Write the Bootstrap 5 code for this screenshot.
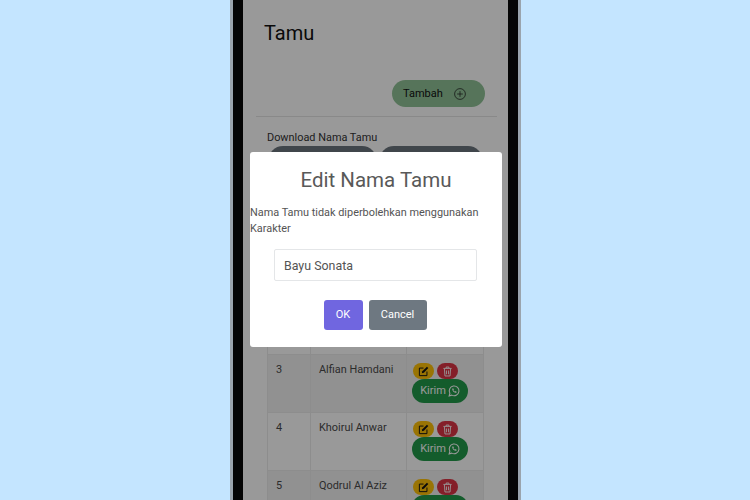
<!DOCTYPE html>
<html lang="id">
<head>
<meta charset="utf-8">
<title>Tamu</title>
<link rel="stylesheet" href="https://cdn.jsdelivr.net/npm/bootstrap@5.3.0/dist/css/bootstrap.min.css">
<style>
html,body{height:500px;overflow:hidden}
body{background:#c4e5ff;font-family:Roboto,"Liberation Sans",sans-serif}
.phone-shell{width:291px;height:500px;background:#050505;border-left:3px solid #9aa4ad;border-right:3px solid #9aa4ad;padding:0 10px;flex:none;margin-left:1px}
.phone-screen{height:500px;overflow:hidden;background:#fff}
.page-title{font-size:20px;line-height:24px;font-weight:400;color:#111;margin:21px 0 35px 21px}
.add-row{padding-right:23px}
.btn-add{width:93px;height:27px;border-radius:14px;background:#8fc296;border:0;font-size:11px;font-weight:400;color:#111;padding:1px 0 0 11px;gap:11px}
.rule{margin:9px 11px 14px 13px;border-top:1px solid #000;opacity:.1}
.dl-label{font-size:10.9px;line-height:14px;margin-left:24px;color:#333}
.dl-row{margin:1px 0 0 25px;gap:2px}
.btn-dl{height:30px;border-radius:15px;background:#6c757d;border:0;color:#fff;font-size:11px;padding:0}
.btn-dl-a{width:109px}
.btn-dl-b{width:104px}
.guest-wrap{margin:12px 24px 0}
.guest-table{font-size:10.9px;margin:0;table-layout:fixed;--bs-table-border-color:#ececec;--bs-table-color:#4a4a4a;--bs-table-striped-color:#4a4a4a;color:#4a4a4a}
.guest-table th,.guest-table td{padding:6px 8px;height:58px;vertical-align:top;line-height:17px}
.guest-table thead th{height:50px}
.col-no{width:43px}
.col-name{width:96px}
.guest-table td.act-cell{padding:8px 2px 0 5px}
.chip-row{gap:3px;padding-left:1px}
.chip{width:21px;height:16px;border-radius:8px;border:0;padding:0}
.chip-edit{background:#ffc107;color:#111}
.chip-del{background:#dc3545;color:#fff}
.btn-kirim{width:56px;height:24px;border-radius:12px;background:#22994a;border:0;color:#fff;font-size:11px;padding:0;gap:2px}
.dim-layer{background:rgba(0,0,0,.4);z-index:5}
.alert-box{width:252px;height:195px;background:#fff;border-radius:3px;color:#545454;margin:0 0 1px 1px}
.alert-title{font-size:20.5px;line-height:25px;font-weight:400;color:#595959;margin:16px 0 0;text-align:center}
.alert-text{font-size:10.9px;line-height:16px;margin:12px 0 0;color:#545454}
.alert-input{width:203px;height:32px;margin:12px 0 0 24px;border:1px solid #e4e6e8;border-radius:2px;font-size:12.4px;padding:0 9px;color:#545454;box-shadow:none}
.alert-actions{margin-top:19px;gap:6px;padding-right:2px}
.btn-ok,.btn-cancel{height:30px;border:0;border-radius:3px;color:#fff;font-size:11px;padding:0}
.btn-ok{width:39px;background:#7066e0}
.btn-cancel{width:58px;background:#6e7881}
</style>
</head>
<body class="d-flex justify-content-center">
<svg class="d-none"><defs>
<symbol id="i-edit" viewBox="0 0 16 16"><path d="M8 3H2v11h11V8" fill="none" stroke="currentColor" stroke-width="1.400"/><path d="M5.500 10.500l.8-3L13 1l2 2-6.500 6.700z" fill="currentColor"/></symbol>
<symbol id="i-trash" viewBox="0 0 16 16"><path d="M2 3.500h12M6 3V1.500h4V3M3.500 4l.8 10.500h7.400L12.500 4M6.500 6.500v5.500M9.500 6.500v5.500" fill="none" stroke="currentColor" stroke-width="1.300"/></symbol>
<symbol id="i-wa" viewBox="0 0 16 16"><path d="M1.500 14.500l1-3.500a6.500 6.500 0 1 1 2.500 2.500z" fill="none" stroke="currentColor" stroke-width="1.400"/><path d="M5.500 5c0 3 2.500 5.500 5.500 5.500l.5-1.500-2-1-.7.700C8 8.300 7.500 7.700 7.200 7l.7-.7-1-2z" fill="currentColor"/></symbol>
</defs></svg>
<div class="phone-shell">
  <div class="phone-screen position-relative">
    <h1 class="page-title">Tamu</h1>
    <div class="add-row d-flex justify-content-end">
      <button class="btn btn-add d-flex align-items-center" type="button">Tambah
        <svg width="12" height="12" viewBox="0 0 16 16" fill="none" stroke="#222" stroke-width="1"><circle cx="8" cy="8" r="7.200"/><path d="M8 4.200v7.600M4.200 8h7.600"/></svg>
      </button>
    </div>
    <hr class="rule">
    <div class="dl-label">Download Nama Tamu</div>
    <div class="dl-row d-flex">
      <button class="btn btn-dl btn-dl-a" type="button">Excel</button>
      <button class="btn btn-dl btn-dl-b" type="button">PDF</button>
    </div>
    <div class="guest-wrap">
      <table class="table table-striped table-bordered guest-table">
        <colgroup><col class="col-no"><col class="col-name"><col></colgroup>
        <thead><tr><th>No</th><th>Nama</th><th>Aksi</th></tr></thead>
        <tbody>
          <tr><td>1</td><td>Bayu Sonata</td><td class="act-cell"><div class="chip-row d-flex"><button class="btn chip chip-edit d-flex align-items-center justify-content-center" type="button"><svg width="11" height="11"><use href="#i-edit"/></svg></button><button class="btn chip chip-del d-flex align-items-center justify-content-center" type="button"><svg width="11" height="11"><use href="#i-trash"/></svg></button></div><button class="btn btn-kirim d-flex align-items-center justify-content-center" type="button">Kirim <svg width="12" height="12"><use href="#i-wa"/></svg></button></td></tr>
          <tr><td>2</td><td>Andi Wijaya</td><td class="act-cell"><div class="chip-row d-flex"><button class="btn chip chip-edit d-flex align-items-center justify-content-center" type="button"><svg width="11" height="11"><use href="#i-edit"/></svg></button><button class="btn chip chip-del d-flex align-items-center justify-content-center" type="button"><svg width="11" height="11"><use href="#i-trash"/></svg></button></div><button class="btn btn-kirim d-flex align-items-center justify-content-center" type="button">Kirim <svg width="12" height="12"><use href="#i-wa"/></svg></button></td></tr>
          <tr><td>3</td><td>Alfian Hamdani</td><td class="act-cell"><div class="chip-row d-flex"><button class="btn chip chip-edit d-flex align-items-center justify-content-center" type="button"><svg width="11" height="11"><use href="#i-edit"/></svg></button><button class="btn chip chip-del d-flex align-items-center justify-content-center" type="button"><svg width="11" height="11"><use href="#i-trash"/></svg></button></div><button class="btn btn-kirim d-flex align-items-center justify-content-center" type="button">Kirim <svg width="12" height="12"><use href="#i-wa"/></svg></button></td></tr>
          <tr><td>4</td><td>Khoirul Anwar</td><td class="act-cell"><div class="chip-row d-flex"><button class="btn chip chip-edit d-flex align-items-center justify-content-center" type="button"><svg width="11" height="11"><use href="#i-edit"/></svg></button><button class="btn chip chip-del d-flex align-items-center justify-content-center" type="button"><svg width="11" height="11"><use href="#i-trash"/></svg></button></div><button class="btn btn-kirim d-flex align-items-center justify-content-center" type="button">Kirim <svg width="12" height="12"><use href="#i-wa"/></svg></button></td></tr>
          <tr><td>5</td><td>Qodrul Al Aziz</td><td class="act-cell"><div class="chip-row d-flex"><button class="btn chip chip-edit d-flex align-items-center justify-content-center" type="button"><svg width="11" height="11"><use href="#i-edit"/></svg></button><button class="btn chip chip-del d-flex align-items-center justify-content-center" type="button"><svg width="11" height="11"><use href="#i-trash"/></svg></button></div><button class="btn btn-kirim d-flex align-items-center justify-content-center" type="button">Kirim <svg width="12" height="12"><use href="#i-wa"/></svg></button></td></tr>
        </tbody>
      </table>
    </div>
    <div class="dim-layer position-absolute top-0 start-0 w-100 h-100 d-flex align-items-center justify-content-center">
      <div class="alert-box d-flex flex-column">
        <h2 class="alert-title">Edit Nama Tamu</h2>
        <p class="alert-text">Nama Tamu tidak diperbolehkan menggunakan Karakter</p>
        <input class="form-control alert-input" type="text" value="Bayu Sonata">
        <div class="alert-actions d-flex justify-content-center">
          <button class="btn btn-ok" type="button">OK</button>
          <button class="btn btn-cancel" type="button">Cancel</button>
        </div>
      </div>
    </div>
  </div>
</div>
<script src="https://cdn.jsdelivr.net/npm/bootstrap@5.3.0/dist/js/bootstrap.bundle.min.js"></script>
</body>
</html>
